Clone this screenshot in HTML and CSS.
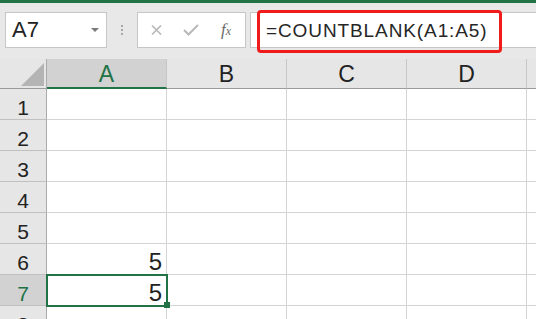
FILE: index.html
```html
<!DOCTYPE html>
<html lang="zh-CN">
<head>
    <meta charset="UTF-8">
    <meta name="viewport" content="width=device-width, initial-scale=1.0">
    <title>COUNTBLANK</title>
    <link rel="stylesheet" href="styles.css">
</head>
<body>
    <div class="titlebar"></div>
    <div class="toolbar">
        <div class="namebox">
            <span>A7</span>
            <span class="caret"></span>
        </div>
        <div class="grip"><i></i><i></i><i></i></div>
        <div class="fbuttons">
            <svg width="11" height="10" viewBox="0 0 11 10"><path d="M1 0.5 L10 9.5 M10 0.5 L1 9.5" stroke="#b8b8b8" stroke-width="1.6" fill="none"/></svg>
            <svg width="16" height="12" viewBox="0 0 16 12"><path d="M1 6 L5.5 10.5 L15 1" stroke="#b8b8b8" stroke-width="2" fill="none"/></svg>
            <span class="fx">f<small>x</small></span>
        </div>
        <div class="formula">
            <span class="formula-text">=COUNTBLANK(A1:A5)</span>
            <div class="highlight"></div>
        </div>
    </div>

    <div class="sheet">
        <div class="corner"><div class="tri"></div></div>
        <div class="colhead selected">A</div>
        <div class="colhead">B</div>
        <div class="colhead">C</div>
        <div class="colhead">D</div>
        <div class="colhead"></div>

        <div class="rowhead">1</div>
        <div class="cell"></div><div class="cell"></div><div class="cell"></div><div class="cell"></div><div class="cell"></div>
        <div class="rowhead">2</div>
        <div class="cell"></div><div class="cell"></div><div class="cell"></div><div class="cell"></div><div class="cell"></div>
        <div class="rowhead">3</div>
        <div class="cell"></div><div class="cell"></div><div class="cell"></div><div class="cell"></div><div class="cell"></div>
        <div class="rowhead">4</div>
        <div class="cell"></div><div class="cell"></div><div class="cell"></div><div class="cell"></div><div class="cell"></div>
        <div class="rowhead">5</div>
        <div class="cell"></div><div class="cell"></div><div class="cell"></div><div class="cell"></div><div class="cell"></div>
        <div class="rowhead">6</div>
        <div class="cell num">5</div><div class="cell"></div><div class="cell"></div><div class="cell"></div><div class="cell"></div>
        <div class="rowhead selected">7</div>
        <div class="cell num active">5</div><div class="cell"></div><div class="cell"></div><div class="cell"></div><div class="cell"></div>
        <div class="rowhead">8</div>
        <div class="cell"></div><div class="cell"></div><div class="cell"></div><div class="cell"></div><div class="cell"></div>
    </div>
</body>
</html>
```

FILE: styles.css
```css
/* Barra superior y de fórmulas */
body {
    margin: 0;
    width: 536px;
    height: 319px;
    overflow: hidden;
    font-family: "Liberation Sans", Arial, sans-serif;
    background-color: #e6e6e6;
    color: #222;
}

.titlebar {
    height: 3px;
    background-color: #217346;
}

.toolbar {
    height: 56px;
    box-sizing: border-box;
    padding-top: 9px;
    display: flex;
    align-items: flex-start;
    background-color: #e8e8e8;
}

.namebox {
    margin-left: 5px;
    width: 102px;
    height: 36px;
    box-sizing: border-box;
    border: 1px solid #c6c6c6;
    background-color: #ffffff;
    display: flex;
    align-items: center;
    justify-content: space-between;
    padding: 0 7px 0 6px;
    font-size: 22px;
}

.caret {
    width: 0;
    height: 0;
    border-left: 4px solid transparent;
    border-right: 4px solid transparent;
    border-top: 4px solid #7a7a7a;
}

.grip {
    width: 30px;
    height: 36px;
    display: flex;
    flex-direction: column;
    align-items: center;
    justify-content: center;
    gap: 2px;
}

.grip i {
    display: block;
    width: 2px;
    height: 2px;
    background-color: #a8a8a8;
}

.fbuttons {
    width: 109px;
    height: 36px;
    box-sizing: border-box;
    border: 1px solid #c6c6c6;
    background-color: #ffffff;
    display: flex;
    align-items: center;
    padding-left: 13px;
    gap: 21px;
}

.fx {
    font-family: "Liberation Serif", serif;
    font-style: italic;
    font-size: 17px;
    color: #6a6a6a;
    margin-left: 1px;
}

.fx small {
    font-size: 12px;
}

.formula {
    position: relative;
    margin-left: 4px;
    flex: 1;
    height: 36px;
    box-sizing: border-box;
    border: 1px solid #c6c6c6;
    border-right: none;
    background-color: #ffffff;
    display: flex;
    align-items: center;
    padding-left: 15px;
    padding-top: 2px;
}

.formula-text {
    font-size: 19px;
    letter-spacing: 0.9px;
    color: #262626;
}

.highlight {
    position: absolute;
    left: 6px;
    top: -3px;
    width: 245px;
    height: 43px;
    box-sizing: border-box;
    border: 3px solid #f01c1c;
    border-radius: 4px;
}

/* Hoja de cálculo */
.sheet {
    display: grid;
    grid-template-columns: 47px repeat(5, 120px);
    grid-template-rows: 30px;
    grid-auto-rows: 31px;
    background-color: #ffffff;
}

.sheet > div {
    box-sizing: border-box;
}

.corner {
    background-color: #e6e6e6;
    border-right: 1px solid #ababab;
    border-bottom: 1px solid #9b9b9b;
    display: flex;
    justify-content: flex-end;
    align-items: flex-end;
    padding: 0 2px 2px 0;
}

.tri {
    width: 23px;
    height: 23px;
    background-color: #b4b4b4;
    clip-path: polygon(100% 0, 100% 100%, 0 100%);
}

.colhead {
    background-color: #e6e6e6;
    border-right: 1px solid #c6c6c6;
    border-bottom: 1px solid #9b9b9b;
    text-align: center;
    font-size: 23px;
    line-height: 30px;
}

.colhead.selected {
    background-color: #d2d2d2;
    border-bottom: 2px solid #217346;
    color: #217346;
}

.rowhead {
    background-color: #e6e6e6;
    border-right: 1px solid #ababab;
    border-bottom: 1px solid #c0c0c0;
    font-size: 21px;
    line-height: 1;
    display: flex;
    justify-content: center;
    align-items: flex-end;
    padding-bottom: 1px;
}

.rowhead.selected {
    background-color: #d2d2d2;
    color: #217346;
}

.cell {
    border-right: 1px solid #d4d4d4;
    border-bottom: 1px solid #d4d4d4;
}

.num {
    font-size: 24px;
    line-height: 1;
    display: flex;
    justify-content: flex-end;
    align-items: flex-end;
    padding-right: 4px;
}

.active {
    position: relative;
}

.active::after {
    content: "";
    position: absolute;
    top: -1px;
    left: -1px;
    right: -2px;
    bottom: -2px;
    border: 2px solid #217346;
}

.active::before {
    content: "";
    position: absolute;
    right: -4px;
    bottom: -3px;
    width: 6px;
    height: 6px;
    background-color: #217346;
    z-index: 1;
}
```
